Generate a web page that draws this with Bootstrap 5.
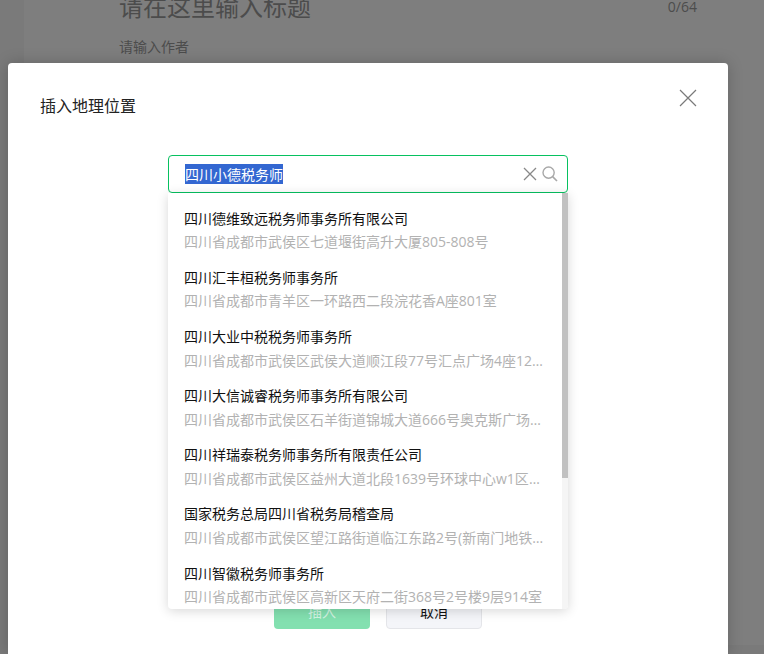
<!DOCTYPE html>
<html lang="zh">
<head>
<meta charset="utf-8">
<title>插入地理位置</title>
<link href="https://cdn.jsdelivr.net/npm/bootstrap@5.3.0/dist/css/bootstrap.min.css" rel="stylesheet">
<style>
html,body{height:100%;overflow:hidden}
body{font-family:"Open Sans","Noto Sans CJK SC",sans-serif;background:#7a7a7a;color:#111;position:relative}
.editor-back{margin-left:24px;height:100%;background:#7e7e7e;padding:0 67px 0 95px}
.head-row{height:31px;margin-top:-9px}
.ttl-back{font-size:24px;line-height:31px;color:#4c4c4c;margin:0}
.cnt-back{font-size:14px;line-height:31px;color:#4c4c4c}
.auth-back{font-size:14px;line-height:20px;color:#4c4c4c;margin-top:15px}
.dlg{position:absolute;left:8px;top:63px;width:720px;height:591px;background:#fff;border-radius:4px 4px 0 0;box-shadow:0 0 16px rgba(0,0,0,.2);padding:31px 32px 0 32px}
.dlg-title{font-size:16px;line-height:24px;color:#222;margin:0}
.dlg-x{position:absolute;right:31px;top:26px;padding:0;border:0;background:none;line-height:0}
.place-box{width:400px;height:38px;margin:37px 0 0 128px;border:1px solid #07c160;border-radius:4px;padding:0 9px 0 16px}
.place-val{display:inline-block;height:20px;font-size:14px;line-height:21px;background:#3367d1;color:#fff}
.drop{position:absolute;left:160px;top:130px;width:400px;height:416px;background:#fff;border-radius:0 0 4px 4px;box-shadow:0 2px 12px rgba(0,0,0,.16);overflow:hidden}
.drop-list{padding:15px 0 0;margin:0;list-style:none;width:394px}
.drop-item{padding:0 16px;height:59.1px;font-size:14px;line-height:22px}
.drop-name{color:#111;white-space:nowrap}
.drop-addr{color:#b2b2b2;white-space:nowrap;overflow:hidden;text-overflow:ellipsis;margin-top:1.4px}
.track{position:absolute;right:0;top:0;bottom:0;width:6px;background:#f5f5f5}
.thumb{height:285px;background:#c1c1c1}
.act-row{position:absolute;left:266px;top:530px;height:36px}
.act-ok,.act-no{width:96px;height:36px;padding:0;font-size:14px;border-radius:4px}
.act-ok{background:#83e0b0;border:0;color:#d3f4e3}
.act-no{background:#f4f5f9;border:1px solid #e4e5e9;color:#111}
.ico-gap{gap:5px}
</style>
</head>
<body>
<div class="editor-back">
  <div class="head-row d-flex justify-content-between align-items-start">
    <h1 class="ttl-back fw-normal">请在这里输入标题</h1>
    <span class="cnt-back">0/64</span>
  </div>
  <div class="auth-back">请输入作者</div>
</div>
<div class="dlg">
  <h5 class="dlg-title fw-normal">插入地理位置</h5>
  <button class="dlg-x" type="button" aria-label="关闭"><svg width="18" height="18" viewBox="0 0 18 18"><path d="M1 1 17 17M17 1 1 17" stroke="#7a7a7a" stroke-width="1.2" fill="none"/></svg></button>
  <div class="place-box d-flex align-items-center justify-content-between">
    <span class="place-val">四川小德税务师</span>
    <span class="d-flex align-items-center ico-gap">
      <svg width="14" height="14" viewBox="0 0 14 14"><path d="M1 1 13 13M13 1 1 13" stroke="#888" stroke-width="1.3" fill="none"/></svg>
      <svg width="16" height="16" viewBox="0 0 16 16"><circle cx="6.6" cy="6.6" r="5.6" stroke="#a8a8a8" stroke-width="1.4" fill="none"/><path d="M10.6 10.6 15 15" stroke="#a8a8a8" stroke-width="1.6"/></svg>
    </span>
  </div>
  <div class="act-row d-flex gap-3">
    <button class="act-ok" type="button">插入</button>
    <button class="act-no" type="button">取消</button>
  </div>
  <div class="drop">
    <ul class="drop-list">
      <li class="drop-item"><div class="drop-name">四川德维致远税务师事务所有限公司</div><div class="drop-addr">四川省成都市武侯区七道堰街高升大厦805-808号</div></li>
      <li class="drop-item"><div class="drop-name">四川汇丰桓税务师事务所</div><div class="drop-addr">四川省成都市青羊区一环路西二段浣花香A座801室</div></li>
      <li class="drop-item"><div class="drop-name">四川大业中税税务师事务所</div><div class="drop-addr">四川省成都市武侯区武侯大道顺江段77号汇点广场4座12楼1201室</div></li>
      <li class="drop-item"><div class="drop-name">四川大信诚睿税务师事务所有限公司</div><div class="drop-addr">四川省成都市武侯区石羊街道锦城大道666号奥克斯广场B座</div></li>
      <li class="drop-item"><div class="drop-name">四川祥瑞泰税务师事务所有限责任公司</div><div class="drop-addr">四川省成都市武侯区益州大道北段1639号环球中心w1区N1座</div></li>
      <li class="drop-item"><div class="drop-name">国家税务总局四川省税务局稽查局</div><div class="drop-addr">四川省成都市武侯区望江路街道临江东路2号(新南门地铁站旁)</div></li>
      <li class="drop-item"><div class="drop-name">四川智徽税务师事务所</div><div class="drop-addr">四川省成都市武侯区高新区天府二街368号2号楼9层914室</div></li>
    </ul>
    <div class="track"><div class="thumb"></div></div>
  </div>
</div>
<script src="https://cdn.jsdelivr.net/npm/bootstrap@5.3.0/dist/js/bootstrap.bundle.min.js"></script>
</body>
</html>
